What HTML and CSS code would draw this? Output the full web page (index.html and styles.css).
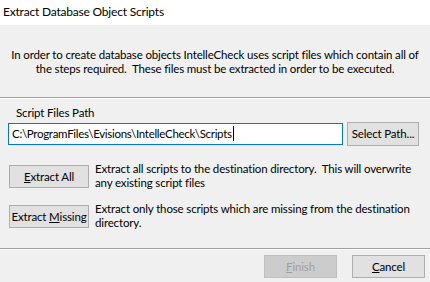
FILE: index.html
```html
<!DOCTYPE html>
<html>
<head>
<meta charset="utf-8">
<link rel="stylesheet" href="styles.css">
</head>
<body>
<div class="window">
  <div class="titlebar">Extract Database Object Scripts</div>
  <div class="intro">
    <p>In order to create database objects IntelleCheck uses script files which contain all of<br>the steps required.&nbsp; These files must be extracted in order to be executed.</p>
  </div>
  <div class="sep"></div>
  <div class="content">
    <div class="label">Script Files Path</div>
    <div class="path-row">
      <div class="textbox">C:\ProgramFiles\Evisions\IntelleCheck\Scripts<span class="caret"></span></div>
      <button class="btn btn-select">Select Path...</button>
    </div>
    <div class="option">
      <button class="btn btn-opt"><u>E</u>xtract All</button>
      <div class="desc">Extract all scripts to the destination directory.&nbsp; This will overwrite<br>any existing script files</div>
    </div>
    <div class="option option-2">
      <button class="btn btn-opt">Extract <u>M</u>issing</button>
      <div class="desc">Extract only those scripts which are missing from the destination<br>directory.</div>
    </div>
  </div>
  <div class="sep sep-bottom"></div>
  <div class="footer">
    <button class="btn btn-foot btn-disabled"><u>F</u>inish</button>
    <button class="btn btn-foot"><u>C</u>ancel</button>
  </div>
</div>
</body>
</html>
```
FILE: styles.css
```css
* { box-sizing: border-box; }
html, body {
  margin: 0;
  padding: 0;
  width: 430px;
  height: 282px;
  overflow: hidden;
  background: #f0f0f0;
}
.window {
  width: 430px;
  height: 282px;
  display: flex;
  flex-direction: column;
  font-family: Lato, "Noto Sans", sans-serif;
  font-size: 11.5px;
  letter-spacing: -0.15px;
  color: #000;
  background: #f0f0f0;
}
.titlebar {
  height: 25px;
  background: #fff;
  padding: 0 0 0 3px;
  line-height: 24px;
  font-size: 12px;
  letter-spacing: -0.2px;
  color: #000;
  white-space: nowrap;
}
.intro {
  height: 72px;
  padding-top: 23px;
  text-align: center;
  white-space: nowrap;
}
.intro p {
  margin: 0;
  line-height: 14px;
}
.sep {
  height: 2px;
  border-top: 1px solid #a0a0a0;
  border-bottom: 1px solid #ffffff;
}
.content {
  height: 149px;
  padding: 6px 12px 0 8px;
}
.label {
  padding-left: 8px;
  line-height: 16px;
  height: 16px;
}
.path-row {
  margin-top: 1px;
  display: flex;
  align-items: center;
  gap: 4px;
}
.textbox {
  flex: none;
  width: 335px;
  height: 22px;
  border: 1px solid #0078d7;
  background: #fff;
  padding: 0 0 0 3px;
  line-height: 20px;
  letter-spacing: -0.3px;
  white-space: nowrap;
}
.caret {
  display: inline-block;
  width: 1px;
  height: 15px;
  background: #000;
  vertical-align: -3px;
  margin-left: 1px;
}
.btn {
  flex: none;
  font-family: inherit;
  font-size: 11.5px;
  letter-spacing: -0.15px;
  color: #000;
  background: #e1e1e1;
  border: 1px solid #adadad;
  border-radius: 0;
  padding: 0;
  margin: 0;
  height: 23px;
  line-height: 20px;
  white-space: nowrap;
}
.btn-select {
  width: 72px;
  height: 24px;
}
.option {
  margin-top: 19px;
  height: 23px;
  display: flex;
  align-items: flex-start;
  gap: 6px;
}
.option-2 { margin-top: 17px; }
.btn-opt {
  width: 80px;
  margin-left: 1px;
}
.desc {
  line-height: 14px;
  margin-top: -3px;
  white-space: nowrap;
}
.footer {
  flex: 1;
  display: flex;
  justify-content: flex-end;
  align-items: flex-start;
  padding: 5px 5px 0 0;
  gap: 15px;
}
.btn-foot {
  width: 73px;
  height: 23px;
}
.btn-disabled {
  background: #cccccc;
  border-color: #bfbfbf;
  color: #a0a0a0;
}
```
